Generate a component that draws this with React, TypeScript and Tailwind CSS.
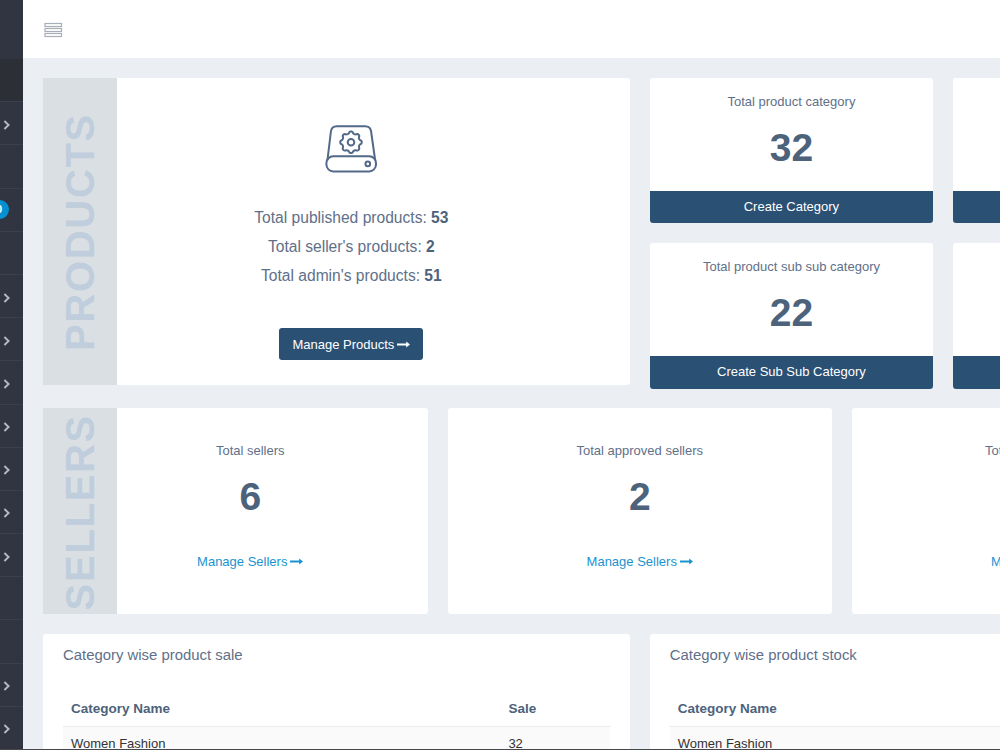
import type { ReactNode } from 'react';
import clsx from 'clsx';

type NavItem = { arrow?: boolean; active?: boolean; badge?: string };

const NAV_ITEMS: NavItem[] = [
  { active: true },
  { arrow: true },
  {},
  { badge: '0' },
  {},
  { arrow: true },
  { arrow: true },
  { arrow: true },
  { arrow: true },
  { arrow: true },
  { arrow: true },
  { arrow: true },
  {},
  {},
  { arrow: true },
  { arrow: true },
];

// Eight rounded teeth around the center of the drive icon
const gearPoints = Array.from({ length: 96 }, (_, i) => {
  const a = (i / 96) * Math.PI * 2;
  const wave = Math.cos(8 * a);
  const r = 9.8 + 1.05 * Math.tanh(1.5 * wave);
  return `${(26 + r * Math.cos(a)).toFixed(2)},${(17.3 + r * Math.sin(a)).toFixed(2)}`;
}).join(' ');

function DriveIcon() {
  return (
    <svg width="52" height="48" viewBox="0 0 52 48" fill="none" stroke="#526a88" strokeWidth="2" strokeLinejoin="round">
      <path d="M2.4 35.5 5.9 6.5Q6.6 1.2 11.9 1.2H40.1Q45.4 1.2 46.1 6.5L50.2 35.5" />
      <rect x="1.4" y="31.2" width="49.6" height="15.2" rx="6.8" />
      <polygon points={gearPoints} />
      <circle cx="26" cy="17.3" r="3.3" />
      <circle cx="42.8" cy="38.9" r="2.3" />
    </svg>
  );
}

function LongArrow() {
  return (
    <svg className="ml-[3px] inline-block align-baseline" width="13" height="9" viewBox="0 0 13 9" fill="currentColor">
      <path d="M0 3.6h9.2V1.6L13 4.5 9.2 7.4V5.4H0z" />
    </svg>
  );
}

function Sidebar() {
  return (
    <aside className="flex w-[23px] shrink-0 flex-col bg-[#303541]">
      <div className="h-[59px] shrink-0" />
      {NAV_ITEMS.map((item, i) => (
        <div
          key={i}
          className={clsx(
            'relative flex h-[43.2px] shrink-0 items-center border-b border-[#3b404c]',
            item.active && 'bg-[#2d2f36]'
          )}
        >
          {item.arrow && (
            <svg className="ml-[3px] mt-[3px]" width="8" height="10" viewBox="0 0 8 10" fill="none" stroke="#b3bac6" strokeWidth="1.9">
              <path d="M1.4 1 5.6 5 1.4 9" />
            </svg>
          )}
          {item.badge && (
            <span className="absolute right-[14px] top-[11px] h-[19px] rounded-full bg-[#0391d1] pl-2 pr-[7px] text-[11px] font-bold leading-[19px] text-white">
              {item.badge}
            </span>
          )}
        </div>
      ))}
    </aside>
  );
}

function SideLabel({ children }: { children: string }) {
  return (
    <div className="flex w-[74px] shrink-0 items-center justify-center bg-[#dadfe3]">
      <span className="mr-px mt-[2px] rotate-180 text-[40px] font-bold leading-none tracking-[1.7px] text-[#bfcddc] [writing-mode:vertical-rl]">
        {children}
      </span>
    </div>
  );
}

function CategoryCard({ label, value, action }: { label: string; value: number; action: string }) {
  return (
    <div className="flex h-[145.3px] flex-col overflow-hidden rounded-[3px] bg-white text-center">
      <p className="mt-[14px] leading-[19px]">{label}</p>
      <p className="mt-[11px] text-[39px] font-bold leading-[52px] text-[#4d627b]">{value}</p>
      <a href="#" className="mt-auto h-[32.3px] bg-[#2a5074] leading-[31px] text-white">
        {action}
      </a>
    </div>
  );
}

function SellerCard({ label, value, side }: { label: string; value: number; side?: ReactNode }) {
  return (
    <div className={clsx('flex h-[206px] bg-white text-center', side ? 'rounded-r-[3px]' : 'rounded-[3px]')}>
      {side}
      <div className={clsx('flex-1', side && 'pr-11')}>
        <p className="mt-[33px] leading-[19px]">{label}</p>
        <p className="mt-[11px] text-[39px] font-bold leading-[52px] text-[#4d627b]">{value}</p>
        <a href="#" className="mt-[29px] block leading-[19px] text-[#1a93d0]">
          Manage Sellers
          <LongArrow />
        </a>
      </div>
    </div>
  );
}

function CategoryTable({ title, column, value }: { title: string; column: string; value: string }) {
  return (
    <div className="h-[300px] rounded-[3px] bg-white px-5">
      <h3 className="pt-[9px] text-[14.9px] leading-6">{title}</h3>
      <table className="mt-[31px] w-full table-fixed text-left">
        <thead>
          <tr className="h-[28px] border-b border-[#e9ecef] text-[13.5px] text-[#4d627b]">
            <th className="w-[80%] px-2 pb-[8px] pt-px leading-[19px]">Category Name</th>
            <th className="px-2 pb-[8px] pt-px leading-[19px]">{column}</th>
          </tr>
        </thead>
        <tbody className="text-[#333]">
          <tr className="bg-[#fafafa]">
            <td className="px-2 py-[7px] leading-[19px]">Women Fashion</td>
            <td className="px-2 py-[7px] leading-[19px]">{value}</td>
          </tr>
        </tbody>
      </table>
    </div>
  );
}

export default function App() {
  return (
    <div className="relative flex h-[750px] w-[1000px] overflow-hidden bg-[#ebeef3] font-['Liberation_Sans',Arial,sans-serif] text-[13px] text-[#607089]">
      <Sidebar />

      <div className="w-[977px] shrink-0">
        {/* Top bar */}
        <header className="flex h-[58px] items-center bg-white pl-[21px]">
          <svg className="mt-[2px]" width="19" height="16" viewBox="0 0 19 16" fill="none" stroke="#a9afb9" strokeWidth="1.2">
            <rect x="1" y="1.5" width="16.5" height="3" />
            <rect x="1" y="6.5" width="16.5" height="3" />
            <rect x="1" y="11.5" width="16.5" height="3" />
          </svg>
        </header>

        <main className="ml-5 flex w-[1193.5px] flex-col gap-5 pt-5">
          {/* Products */}
          <section className="grid h-[310px] grid-cols-2 gap-5">
            <div className="flex h-[307px] rounded-r-[3px] bg-white">
              <SideLabel>PRODUCTS</SideLabel>
              <div className="flex flex-1 flex-col items-center pr-11 pt-[46.5px]">
                <DriveIcon />
                <div className="mt-[30.5px] text-center text-[15.6px] leading-[29px]">
                  <p>Total published products: <b className="text-[#4d627b]">53</b></p>
                  <p>Total seller's products: <b className="text-[#4d627b]">2</b></p>
                  <p>Total admin's products: <b className="text-[#4d627b]">51</b></p>
                </div>
                <a href="#" className="mt-[38px] h-8 rounded-[3px] bg-[#2a5074] px-[13px] leading-[33px] text-white">
                  Manage Products
                  <LongArrow />
                </a>
              </div>
            </div>

            <div className="grid grid-cols-2 content-start gap-5">
              <CategoryCard label="Total product category" value={32} action="Create Category" />
              <CategoryCard label="Total product sub category" value={27} action="Create Sub Category" />
              <CategoryCard label="Total product sub sub category" value={22} action="Create Sub Sub Category" />
              <CategoryCard label="Total product brand" value={12} action="Create Brand" />
            </div>
          </section>

          {/* Sellers */}
          <section className="grid grid-cols-3 gap-5">
            <SellerCard label="Total sellers" value={6} side={<SideLabel>SELLERS</SideLabel>} />
            <SellerCard label="Total approved sellers" value={2} />
            <SellerCard label="Total pending sellers" value={4} />
          </section>

          {/* Category tables */}
          <section className="grid grid-cols-2 gap-5">
            <CategoryTable title="Category wise product sale" column="Sale" value="32" />
            <CategoryTable title="Category wise product stock" column="Stock" value="120" />
          </section>
        </main>
      </div>

      <div className="absolute inset-x-0 bottom-0 h-px bg-[#45474c]" />
    </div>
  );
}
